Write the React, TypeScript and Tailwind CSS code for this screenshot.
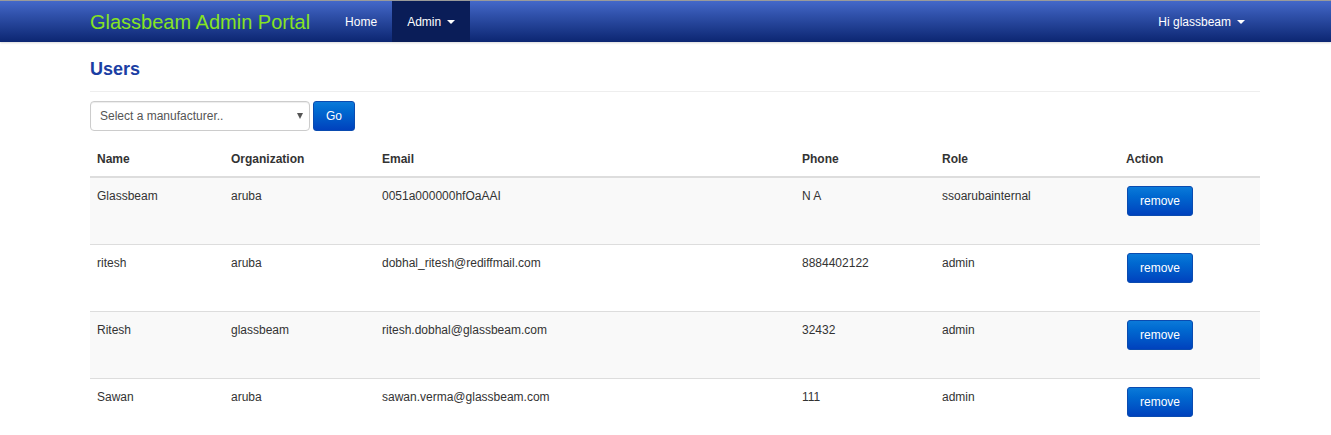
import React from "react";

const users = [
  { name: "Glassbeam", org: "aruba", email: "0051a000000hfOaAAI", phone: "N A", role: "ssoarubainternal" },
  { name: "ritesh", org: "aruba", email: "dobhal_ritesh@rediffmail.com", phone: "8884402122", role: "admin" },
  { name: "Ritesh", org: "glassbeam", email: "ritesh.dobhal@glassbeam.com", phone: "32432", role: "admin" },
  { name: "Sawan", org: "aruba", email: "sawan.verma@glassbeam.com", phone: "111", role: "admin" },
];

const cols = [
  { label: "Name", w: "w-[134px]" },
  { label: "Organization", w: "w-[151px]" },
  { label: "Email", w: "w-[420px]" },
  { label: "Phone", w: "w-[140px]" },
  { label: "Role", w: "w-[184px]" },
  { label: "Action", w: "w-[141px]" },
];

function Caret() {
  return <span className="inline-block ml-[6px] align-middle border-x-[4px] border-x-transparent border-t-[4px] border-t-white" />;
}

function BlueButton({ children, className = "" }: { children: React.ReactNode; className?: string }) {
  return (
    <button
      className={`h-[30px] rounded-[3px] border border-[#0a4bb0] bg-gradient-to-b from-[#0b7ad9] to-[#0041bd] text-white text-[12px] leading-none ${className}`}
    >
      {children}
    </button>
  );
}

export default function App() {
  return (
    <div className="min-h-[435px] bg-white font-['Liberation_Sans',Arial,sans-serif] text-[12px] text-[#333]">
      {/* ── Navbar ─────────────────────────────────────────── */}
      <header className="h-[42px] border-t border-t-[#9a9a9a] bg-gradient-to-b from-[#4468c9] to-[#0c2672] shadow-[0_1px_2px_rgba(0,0,0,0.15)]">
        <nav className="ml-[90px] w-[1170px] h-full flex items-stretch">
          <a className="flex items-center text-[20px] text-[#86e422] pr-[20px]">Glassbeam Admin Portal</a>
          <a className="flex items-center px-[15px] text-white">Home</a>
          <a className="flex items-center px-[15px] text-white bg-[#0a1d58]">
            Admin
            <Caret />
          </a>
          <div className="flex-1" />
          <a className="flex items-center px-[15px] text-white">
            Hi glassbeam
            <Caret />
          </a>
        </nav>
      </header>

      {/* ── Content ────────────────────────────────────────── */}
      <main className="ml-[90px] w-[1170px]">
        <h1 className="pt-[17px] pb-[12px] text-[18px] leading-[20px] font-bold text-[#1b3ea3] border-b border-b-[#eee]">
          Users
        </h1>

        <div className="mt-[9px] flex items-center gap-[3px]">
          <div className="relative w-[220px] h-[30px] rounded-[4px] border border-[#ccc] flex items-center px-[9px] text-[#555] shadow-[inset_0_1px_1px_rgba(0,0,0,0.075)]">
            Select a manufacturer..
            <span className="absolute right-[6px] top-[11px] border-x-[3px] border-x-transparent border-t-[6px] border-t-[#555]" />
          </div>
          <BlueButton className="w-[42px]">Go</BlueButton>
        </div>

        <table className="mt-[11px] w-[1170px] border-collapse table-fixed">
          <thead>
            <tr>
              {cols.map((c) => (
                <th
                  key={c.label}
                  className={`${c.w} text-left font-bold px-[7px] pt-[9px] pb-[8px] leading-[17px] border-b-2 border-b-[#ddd]`}
                >
                  {c.label}
                </th>
              ))}
            </tr>
          </thead>
          <tbody>
            {users.map((u, i) => (
              <tr key={i} className={`h-[67px] ${i % 2 === 0 ? "bg-[#f9f9f9]" : "bg-white"}`}>
                <td className="align-top px-[7px] pt-[10px] leading-[17px] border-t border-t-[#ddd]">{u.name}</td>
                <td className="align-top px-[7px] pt-[10px] leading-[17px] border-t border-t-[#ddd]">{u.org}</td>
                <td className="align-top px-[7px] pt-[10px] leading-[17px] border-t border-t-[#ddd]">{u.email}</td>
                <td className="align-top px-[7px] pt-[10px] leading-[17px] border-t border-t-[#ddd]">{u.phone}</td>
                <td className="align-top px-[7px] pt-[10px] leading-[17px] border-t border-t-[#ddd]">{u.role}</td>
                <td className="align-top px-[8px] pt-[8px] leading-[17px] border-t border-t-[#ddd]">
                  <BlueButton className="w-[66px]">remove</BlueButton>
                </td>
              </tr>
            ))}
          </tbody>
        </table>
      </main>
    </div>
  );
}
